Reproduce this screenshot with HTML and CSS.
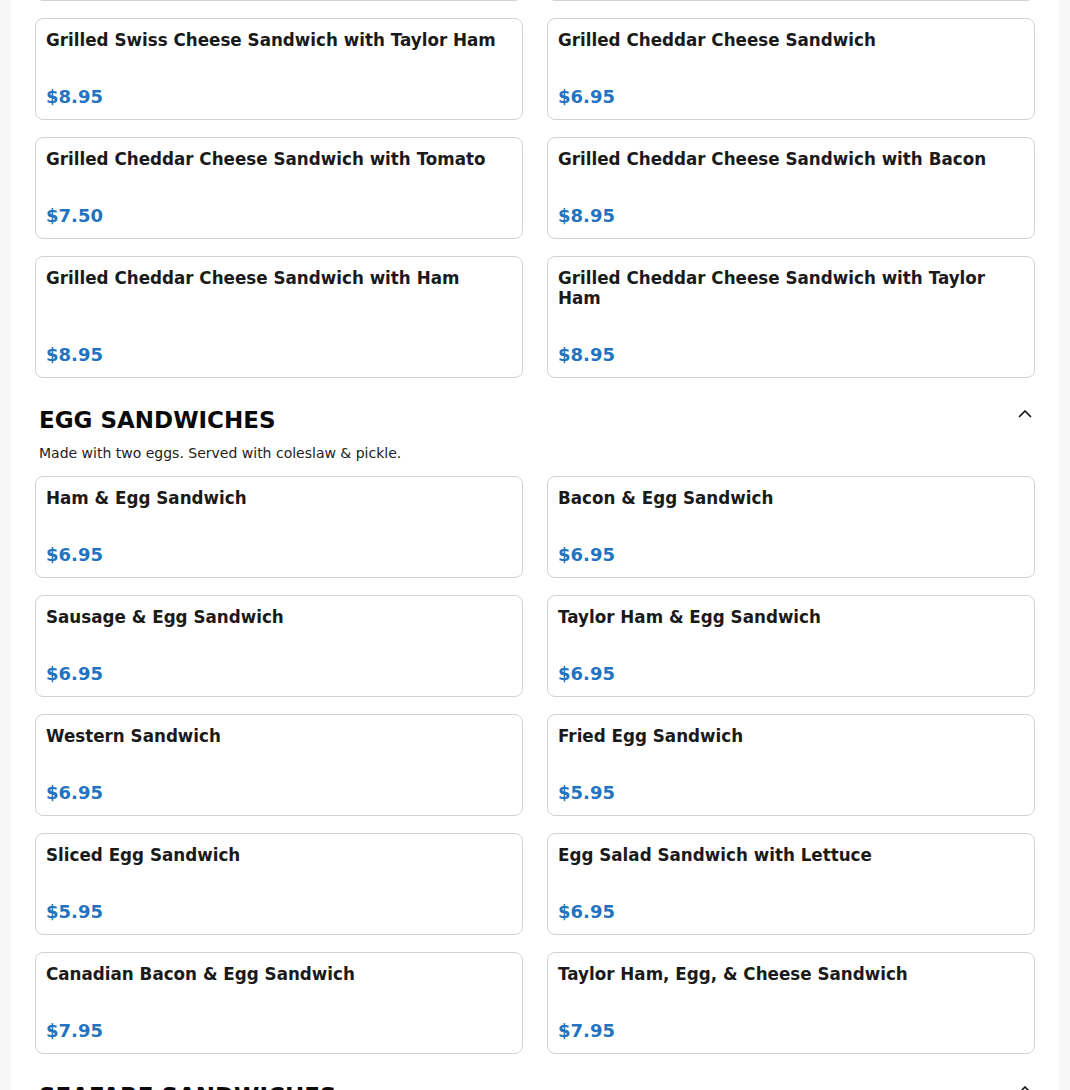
FILE: index.html
```html
<!DOCTYPE html>
<html lang="en">
<head>
<meta charset="utf-8">
<title>Menu</title>
<link rel="stylesheet" href="styles.css">
</head>
<body>
<main class="panel">
  <section class="section section-prev">
    <div class="grid">
      <div class="card"><div class="card-title">Grilled Swiss Cheese Sandwich with Ham</div><div class="card-price">$8.95</div></div>
      <div class="card"><div class="card-title">Grilled Swiss Cheese Sandwich with Bacon</div><div class="card-price">$8.95</div></div>
      <div class="card"><div class="card-title">Grilled Swiss Cheese Sandwich with Taylor Ham</div><div class="card-price">$8.95</div></div>
      <div class="card"><div class="card-title">Grilled Cheddar Cheese Sandwich</div><div class="card-price">$6.95</div></div>
      <div class="card"><div class="card-title">Grilled Cheddar Cheese Sandwich with Tomato</div><div class="card-price">$7.50</div></div>
      <div class="card"><div class="card-title">Grilled Cheddar Cheese Sandwich with Bacon</div><div class="card-price">$8.95</div></div>
      <div class="card"><div class="card-title">Grilled Cheddar Cheese Sandwich with Ham</div><div class="card-price">$8.95</div></div>
      <div class="card"><div class="card-title">Grilled Cheddar Cheese Sandwich with Taylor Ham</div><div class="card-price">$8.95</div></div>
    </div>
  </section>

  <section class="section">
    <div class="section-head">
      <h2 class="section-title">EGG SANDWICHES</h2>
      <svg class="chevron" width="16" height="16" viewBox="0 0 16 16"><polyline points="2.5,10.5 8,5 13.5,10.5" fill="none" stroke="#111" stroke-width="1.7" stroke-linecap="round" stroke-linejoin="round"/></svg>
    </div>
    <p class="section-desc">Made with two eggs. Served with coleslaw &amp; pickle.</p>
    <div class="grid">
      <div class="card"><div class="card-title">Ham &amp; Egg Sandwich</div><div class="card-price">$6.95</div></div>
      <div class="card"><div class="card-title">Bacon &amp; Egg Sandwich</div><div class="card-price">$6.95</div></div>
      <div class="card"><div class="card-title">Sausage &amp; Egg Sandwich</div><div class="card-price">$6.95</div></div>
      <div class="card"><div class="card-title">Taylor Ham &amp; Egg Sandwich</div><div class="card-price">$6.95</div></div>
      <div class="card"><div class="card-title">Western Sandwich</div><div class="card-price">$6.95</div></div>
      <div class="card"><div class="card-title">Fried Egg Sandwich</div><div class="card-price">$5.95</div></div>
      <div class="card"><div class="card-title">Sliced Egg Sandwich</div><div class="card-price">$5.95</div></div>
      <div class="card"><div class="card-title">Egg Salad Sandwich with Lettuce</div><div class="card-price">$6.95</div></div>
      <div class="card"><div class="card-title">Canadian Bacon &amp; Egg Sandwich</div><div class="card-price">$7.95</div></div>
      <div class="card"><div class="card-title">Taylor Ham, Egg, &amp; Cheese Sandwich</div><div class="card-price">$7.95</div></div>
    </div>
  </section>

  <section class="section">
    <div class="section-head">
      <h2 class="section-title">SEAFARE SANDWICHES</h2>
      <svg class="chevron" width="16" height="16" viewBox="0 0 16 16"><polyline points="2.5,10.5 8,5 13.5,10.5" fill="none" stroke="#111" stroke-width="1.7" stroke-linecap="round" stroke-linejoin="round"/></svg>
    </div>
    <p class="section-desc">Served with coleslaw &amp; pickle.</p>
  </section>
</main>
</body>
</html>
```
FILE: styles.css
```css
html, body {
  margin: 0;
  padding: 0;
}
body {
  background: #f7f7f7;
  font-family: "DejaVu Sans", "Liberation Sans", sans-serif;
  color: #1c1c1c;
  overflow: hidden;
}
.panel {
  width: 1000px;
  margin: 0 auto;
  padding: 0 24px 40px;
  background: #ffffff;
}
.section {
  padding-top: 28px;
}
.section-prev {
  padding-top: 0;
  margin-top: -101px;
}
.section-head {
  display: flex;
  justify-content: space-between;
  align-items: flex-start;
  padding: 0 2px 0 4px;
}
.section-title {
  margin: 0;
  font-size: 23px;
  line-height: 28px;
  font-weight: bold;
  color: #0a0a0a;
}
.chevron {
  display: block;
}
.section-desc {
  margin: 9px 0 13px;
  padding: 0 4px;
  font-size: 14px;
  line-height: 20px;
  color: #222;
}
.grid {
  display: grid;
  grid-template-columns: 1fr 1fr;
  column-gap: 24px;
  row-gap: 17px;
}
.card {
  border: 1px solid #d2d2d2;
  border-radius: 8px;
  padding: 11px 10px 10px;
  display: flex;
  flex-direction: column;
}
.card-title {
  font-size: 16.75px;
  line-height: 20px;
  font-weight: bold;
  color: #1a1a1a;
  margin-bottom: 35px;
}
.card-price {
  margin-top: auto;
  font-size: 18px;
  line-height: 24px;
  font-weight: bold;
  color: #2274c0;
}
```
